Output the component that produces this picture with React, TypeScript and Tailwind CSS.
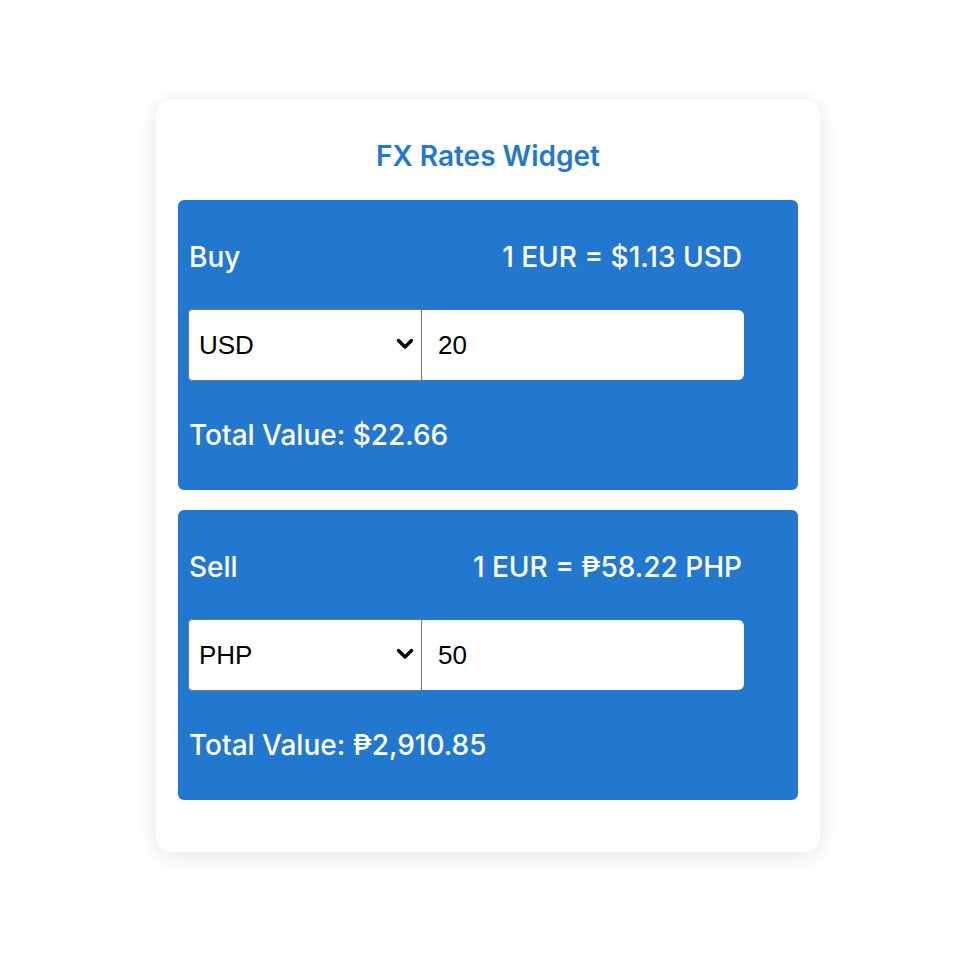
import React from "react";

function Chevron() {
  return (
    <svg width="18" height="12" viewBox="0 0 18 12" className="absolute right-[7px] top-[28px] pointer-events-none">
      <path d="M2.5 2.5 L9 9 L15.5 2.5" fill="none" stroke="#000" strokeWidth="3.4" strokeLinecap="round" strokeLinejoin="round" />
    </svg>
  );
}

function Panel({ label, rate, code, amount, total }: { label: string; rate: string; code: string; amount: string; total: string }) {
  return (
    <div className="bg-[#2278cf] rounded-[6px] pl-[10px] pt-[32px] pb-[30px] flex flex-col">
      <div className="w-[556px] h-[50px] flex items-center justify-between pl-[1px] pr-[2px] text-white text-[28px] font-medium" style={{ fontFamily: "Inter, sans-serif" }}>
        <span>{label}</span>
        <span>{rate}</span>
      </div>
      <div className="mt-[27px] w-[556px] h-[72px] flex items-center">
        <div className="relative w-[234px] h-[72px] bg-white border border-[#767676] rounded-l-[4px] flex items-center pl-[10px] text-[26px] text-black" style={{ fontFamily: "'Liberation Sans', Arial, sans-serif" }}>
          {code}
          <Chevron />
        </div>
        <div className="flex-1 h-[70px] bg-white rounded-r-[6px] flex items-center pl-[16px] text-[26px] text-black" style={{ fontFamily: "'Liberation Sans', Arial, sans-serif" }}>
          {amount}
        </div>
      </div>
      <div className="mt-[29px] h-[50px] flex items-center pl-[1px] text-white text-[28px] font-medium" style={{ fontFamily: "Inter, sans-serif" }}>
        {total}
      </div>
    </div>
  );
}

export default function App() {
  return (
    <div className="min-h-[976px] w-full bg-white flex justify-center pt-[100px]">
      <div className="w-[664px] h-[752px] bg-white rounded-[16px] shadow-[0_4px_24px_rgba(0,0,0,0.1)] px-[22px] flex flex-col">
        <div className="h-[100px] pt-[12px] flex items-center justify-center text-[#2278cf] text-[28px] font-semibold" style={{ fontFamily: "Inter, sans-serif" }}>
          FX Rates Widget
        </div>
        <div className="flex flex-col gap-[20px]">
          <Panel label="Buy" rate="1 EUR = $1.13 USD" code="USD" amount="20" total="Total Value: $22.66" />
          <Panel label="Sell" rate="1 EUR = ₱58.22 PHP" code="PHP" amount="50" total="Total Value: ₱2,910.85" />
        </div>
      </div>
    </div>
  );
}
